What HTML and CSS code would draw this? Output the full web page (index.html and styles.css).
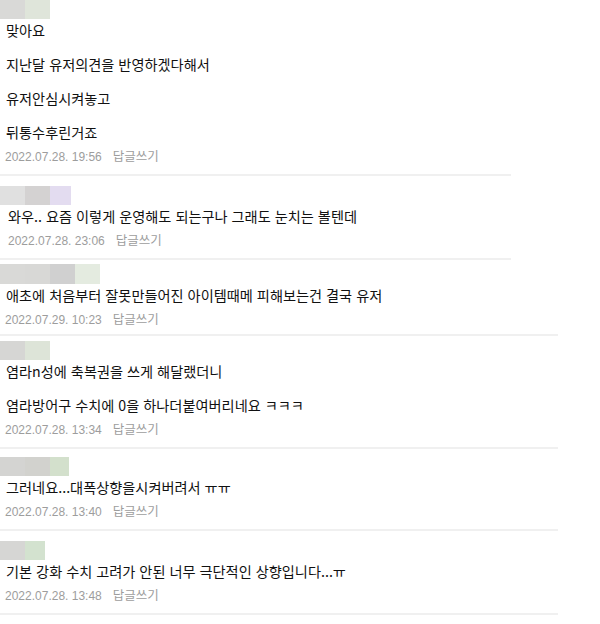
FILE: index.html
```html
<!DOCTYPE html>
<html lang="ko">
<head>
  <meta charset="UTF-8">
  <meta name="viewport" content="width=device-width, initial-scale=1.0">
  <title>댓글</title>
  <link rel="stylesheet" href="styles.css">
</head>
<body>
  <ul class="comments">

    <li class="comment comment-narrow gap-none">
      <div class="nick">
        <span class="tile t-grey1"></span><span class="tile t-green1"></span>
      </div>
      <p class="text">맞아요</p>
      <p class="text">지난달 유저의견을 반영하겠다해서</p>
      <p class="text">유저안심시켜놓고</p>
      <p class="text">뒤통수후린거죠</p>
      <div class="meta"><span class="date">2022.07.28. 19:56</span><span class="reply">답글쓰기</span></div>
    </li>

    <li class="comment comment-narrow gap-wide indent">
      <div class="nick">
        <span class="tile t-grey2"></span><span class="tile t-grey3"></span><span class="tile tile-21 t-lav"></span>
      </div>
      <p class="text">와우.. 요즘 이렇게 운영해도 되는구나 그래도 눈치는 볼텐데</p>
      <div class="meta"><span class="date">2022.07.28. 23:06</span><span class="reply">답글쓰기</span></div>
    </li>

    <li class="comment comment-tight gap-small">
      <div class="nick tall">
        <span class="tile t-grey1"></span><span class="tile t-grey4"></span><span class="tile t-grey5"></span><span class="tile t-green2"></span>
      </div>
      <p class="text">애초에 처음부터 잘못만들어진 아이템때메 피해보는건 결국 유저</p>
      <div class="meta"><span class="date">2022.07.29. 10:23</span><span class="reply">답글쓰기</span></div>
    </li>

    <li class="comment gap-smallish">
      <div class="nick">
        <span class="tile t-grey6"></span><span class="tile t-green3"></span>
      </div>
      <p class="text">염라n성에 축복권을 쓰게 해달랬더니</p>
      <p class="text">염라방어구 수치에 0을 하나더붙여버리네요 ㅋㅋㅋ</p>
      <div class="meta"><span class="date">2022.07.28. 13:34</span><span class="reply">답글쓰기</span></div>
    </li>

    <li class="comment gap-mid">
      <div class="nick">
        <span class="tile t-grey7"></span><span class="tile t-grey8"></span><span class="tile tile-19 t-green4"></span>
      </div>
      <p class="text">그러네요...대폭상향을시켜버려서 ㅠㅠ</p>
      <div class="meta"><span class="date">2022.07.28. 13:40</span><span class="reply">답글쓰기</span></div>
    </li>

    <li class="comment gap-wide">
      <div class="nick">
        <span class="tile t-grey6"></span><span class="tile tile-20 t-green5"></span>
      </div>
      <p class="text">기본 강화 수치 고려가 안된 너무 극단적인 상향입니다...ㅠ</p>
      <div class="meta"><span class="date">2022.07.28. 13:48</span><span class="reply">답글쓰기</span></div>
    </li>

  </ul>
</body>
</html>
```

FILE: styles.css
```css
/* Reset */
* {
  margin: 0;
  padding: 0;
  box-sizing: border-box;
}

body {
  background: #fff;
  color: #111;
  font-family: "Noto Sans CJK KR", "Liberation Sans", sans-serif;
}

/* Comment list */
.comments {
  list-style: none;
  width: 558px;
}

.comment {
  padding-bottom: 8px;
  border-bottom: 2px solid #f0f0f0;
}

.comment-narrow {
  width: 511px;
}

.comment-tight {
  padding-bottom: 5px;
}

/* space between divider and the blurred nickname */
.gap-none { padding-top: 0; }
.gap-small { padding-top: 4px; }
.gap-smallish { padding-top: 5px; }
.gap-mid { padding-top: 8px; }
.gap-wide { padding-top: 10px; }

/* Blurred nickname tiles */
.nick {
  display: flex;
  height: 19px;
}

.nick.tall {
  height: 20px;
}

.tile {
  width: 25px;
  height: 100%;
}

.tile-21 { width: 21px; }
.tile-20 { width: 20px; }
.tile-19 { width: 19px; }

.t-grey1 { background: #d9d9d7; }
.t-grey2 { background: #e0e0e0; }
.t-grey3 { background: #d4d2d2; }
.t-grey4 { background: #d8d8d6; }
.t-grey5 { background: #d0d0d0; }
.t-grey6 { background: #d6d6d4; }
.t-grey7 { background: #d4d4d2; }
.t-grey8 { background: #d2d2ce; }
.t-lav { background: #e3dcf0; }
.t-green1 { background: #dfe5da; }
.t-green2 { background: #e4ebe0; }
.t-green3 { background: #dde4d8; }
.t-green4 { background: #d3e0cc; }
.t-green5 { background: #d3e2cf; }

/* Comment body */
.text {
  font-size: 14.2px;
  line-height: 20px;
  margin-top: 14px;
  padding-left: 6px;
}

.nick + .text {
  margin-top: 1px;
}

.indent .text,
.indent .meta {
  padding-left: 8px;
}

.meta {
  display: flex;
  gap: 11px;
  margin-top: 6px;
  padding-left: 5px;
  font-family: "Liberation Sans", "Noto Sans CJK KR", sans-serif;
  font-size: 12px;
  line-height: 18px;
  color: #9d9d9d;
}

.reply {
  font-size: 12.5px;
}
```
